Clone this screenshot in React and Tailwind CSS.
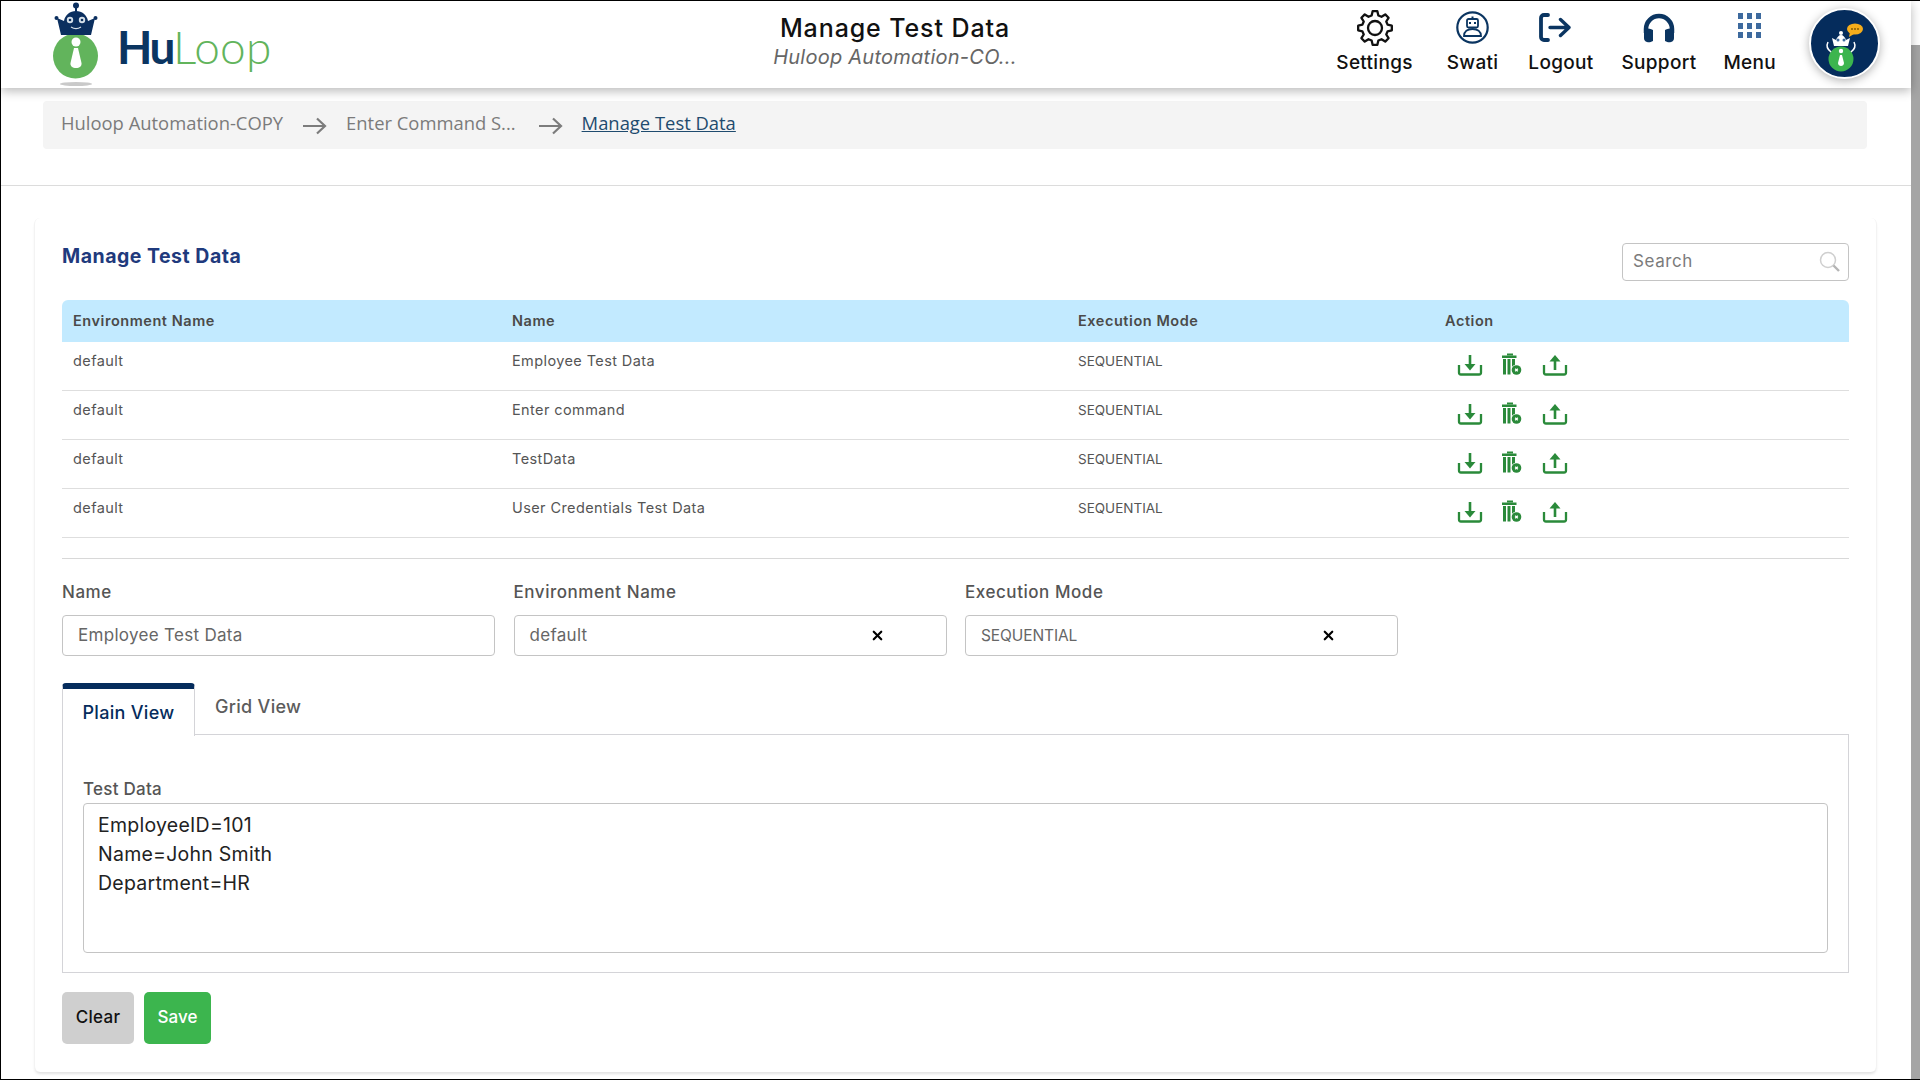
import React from "react";
import { X } from "lucide-react";

const rows = [
  { env: "default", name: "Employee Test Data", mode: "SEQUENTIAL" },
  { env: "default", name: "Enter command", mode: "SEQUENTIAL" },
  { env: "default", name: "TestData", mode: "SEQUENTIAL" },
  { env: "default", name: "User Credentials Test Data", mode: "SEQUENTIAL" },
];

function Logo() {
  return (
    <svg width="52" height="87" viewBox="50 0 52 87">
      <ellipse cx="76" cy="83" rx="16" ry="2" fill="#c9c9c9" />
      <circle cx="75.5" cy="55" r="22.5" fill="#62b45c" />
      <circle cx="76" cy="41" r="4.5" fill="#fff" />
      <path d="M74 47h4l3.500 15c.5 3-2 5-5.500 5s-6-2-5.500-5z" fill="#fff" />
      <circle cx="76" cy="4.500" r="3" fill="#0b2f5f" />
      <rect x="75" y="6" width="2" height="6" fill="#0b2f5f" />
      <circle cx="56.500" cy="17" r="2" fill="#0b2f5f" />
      <circle cx="95.500" cy="17" r="2" fill="#0b2f5f" />
      <path d="M57 17l7 3c1-6 6-10 12-10s11 4 12 10l7-3-4 17H61z" fill="#0b2f5f" />
      <circle cx="70" cy="19" r="3.200" fill="#d5dfe8" />
      <circle cx="82" cy="19" r="3.200" fill="#d5dfe8" />
      <circle cx="70" cy="19" r="1.300" fill="#0b2f5f" />
      <circle cx="82" cy="19" r="1.300" fill="#0b2f5f" />
      <path d="M71 26c3 2 7 2 10 0" stroke="#d5dfe8" strokeWidth="1.200" fill="none" />
    </svg>
  );
}

// outline of an 8 tooth cog
function gearPath() {
  const pt = (r, deg) => {
    const a = (deg * Math.PI) / 180;
    return (18 + r * Math.cos(a)).toFixed(2) + " " + (18 + r * Math.sin(a)).toFixed(2);
  };
  let d = "";
  for (let i = 0; i < 8; i++) {
    const c = i * 45 - 90;
    d += (i === 0 ? "M" : "L") + pt(13, c - 15);
    d += "L" + pt(17, c - 8) + "L" + pt(17, c + 8) + "L" + pt(13, c + 15);
  }
  return d + "Z";
}

function GearIcon() {
  return (
    <svg width="36" height="36" viewBox="0 0 36 36" fill="none" stroke="#111" strokeWidth="2.300" strokeLinejoin="round">
      <path d={gearPath()} />
      <circle cx="18" cy="18" r="7" />
    </svg>
  );
}

function SwatiIcon() {
  return (
    <svg width="33" height="33" viewBox="0 0 33 33" fill="none">
      <circle cx="16.500" cy="16.500" r="15.200" stroke="#0b3561" strokeWidth="2.200" />
      <rect x="15.500" y="5.500" width="2" height="3" fill="#0b3561" />
      <rect x="11" y="8" width="11" height="8.500" rx="1.500" stroke="#0b3561" strokeWidth="1.800" />
      <rect x="13" y="11" width="2" height="2" fill="#0b3561" />
      <rect x="18" y="11" width="2" height="2" fill="#0b3561" />
      <path d="M8 25c0-4.500 3.500-7 8.500-7s8.500 2.500 8.500 7z" stroke="#0b3561" strokeWidth="1.800" />
    </svg>
  );
}

function LogoutIcon() {
  return (
    <svg width="32" height="29" viewBox="0 0 32 29" fill="none" stroke="#0b3561" strokeLinecap="round" strokeLinejoin="round">
      <path d="M9 2H5a3 3 0 0 0-3 3v19a3 3 0 0 0 3 3h4" strokeWidth="3.800" />
      <path d="M11 14.500h19M21.500 6.500l8.500 8-8.500 8" strokeWidth="3.400" />
    </svg>
  );
}

function HeadphonesIcon() {
  return (
    <svg width="32" height="30" viewBox="0 0 32 30" fill="#0b3561">
      <path d="M3 20V16a13 13 0 0 1 26 0v4" fill="none" stroke="#0b3561" strokeWidth="4.500" />
      <path d="M1 18c0-1.500 1-2.500 2.500-2.500S8 15.500 10 17v11c-2.500 1.500-4.500 1.500-6 1-2-.5-3-2-3-4z" />
      <path d="M31 18c0-1.500-1-2.500-2.500-2.500S24 15.500 22 17v11c2.500 1.500 4.500 1.500 6 1 2-.5 3-2 3-4z" />
    </svg>
  );
}

function MenuIcon() {
  return (
    <div className="grid grid-cols-3 gap-[3.500px]">
      {Array.from({ length: 9 }).map((_, i) => (
        <span key={i} className="w-[5.500px] h-[6px] bg-[#3d6a9e]" />
      ))}
    </div>
  );
}

function Avatar() {
  return (
    <div className="ml-[6px] w-[71px] h-[71px] rounded-full bg-[#052c5c] border-2 border-white shadow-[0_2px_10px_rgba(0,0,0,0.3)] shrink-0">
      <svg width="67" height="67" viewBox="0 0 67 67">
        <ellipse cx="44" cy="19" rx="8" ry="5.500" fill="#f6ad1b" />
        <path d="M39 22l-1 5 5-3z" fill="#f6ad1b" />
        <circle cx="41" cy="19" r="0.900" fill="#7a5200" />
        <circle cx="44" cy="19" r="0.900" fill="#7a5200" />
        <circle cx="47" cy="19" r="0.900" fill="#7a5200" />
        <circle cx="30" cy="49" r="12.500" fill="#3cb54e" />
        <circle cx="30" cy="41" r="2.200" fill="#fff" />
        <path d="M29 45h2l2 8c0 2-1.500 3-3 3s-3-1-3-3z" fill="#fff" />
        <circle cx="30" cy="23" r="2" fill="#fff" />
        <path d="M21 28l4 2c1-3 3-5 5-5s4 2 5 5l4-2-2 8H23z" fill="#fff" />
        <circle cx="27" cy="30" r="1.500" fill="#3d6a9e" />
        <circle cx="33" cy="30" r="1.500" fill="#3d6a9e" />
        <path d="M17 32c-2 4-1 7 3 10M43 32c2 4 1 7-3 10" stroke="#fff" strokeWidth="1.500" fill="none" />
      </svg>
    </div>
  );
}

function NavItem({ icon, label, iconClass = "", className = "" }) {
  return (
    <div className={"flex flex-col items-center " + className}>
      <div className={"h-[39px] flex items-center justify-center " + iconClass}>{icon}</div>
      <span className="text-[19px] leading-[24px] mt-[4px] text-[#111] font-[450] tracking-[0.3px]">{label}</span>
    </div>
  );
}

function DownloadIcon() {
  return (
    <svg width="26" height="22" viewBox="0 0 26 22" fill="none" stroke="#2a8a3a" strokeWidth="2.300">
      <path d="M2 11v7.500a2 2 0 0 0 2 2h18a2 2 0 0 0 2-2V11" />
      <path d="M13 1v11" strokeWidth="2.600" />
      <path d="M7.500 10h11L13 16.500z" fill="#2a8a3a" stroke="none" />
    </svg>
  );
}

function UploadIcon() {
  return (
    <svg width="26" height="22" viewBox="0 0 26 22" fill="none" stroke="#2a8a3a" strokeWidth="2.300">
      <path d="M2 11v7.500a2 2 0 0 0 2 2h18a2 2 0 0 0 2-2V11" />
      <path d="M13 7v9" strokeWidth="2.600" />
      <path d="M7.500 7.500h11L13 1z" fill="#2a8a3a" stroke="none" />
    </svg>
  );
}

function TrashIcon() {
  return (
    <svg width="20" height="23" viewBox="0 0 20 23">
      <rect x="5" y="0.500" width="6" height="2" fill="#2a8a3a" />
      <rect x="0" y="2.500" width="14.500" height="2.500" fill="#2a8a3a" />
      <rect x="1" y="6" width="3" height="15.500" fill="#2a8a3a" />
      <rect x="5.500" y="6" width="3" height="15.500" fill="#2a8a3a" />
      <rect x="10" y="6" width="3" height="8" fill="#2a8a3a" />
      <circle cx="14.500" cy="17" r="5.500" fill="#fff" />
      <circle cx="14.500" cy="17" r="4.800" fill="#2a8a3a" />
      <path d="M13.200 15.700l2.600 2.600M15.800 15.700l-2.600 2.600" stroke="#fff" strokeWidth="1.300" />
    </svg>
  );
}

function SearchIcon() {
  return (
    <svg width="22" height="22" viewBox="0 0 22 22" fill="none">
      <circle cx="9" cy="9" r="7.500" stroke="#cfcfcf" strokeWidth="1.500" />
      <path d="M14.500 14.500L20 20" stroke="#b5b5b5" strokeWidth="2.400" />
    </svg>
  );
}

function Arrow() {
  return (
    <svg width="24" height="18" viewBox="0 0 24 18" fill="none" stroke="#7c7c7c" strokeWidth="2.200">
      <path d="M0 9h22M14 1.500L22 9l-8 7.500" />
    </svg>
  );
}

function Field({ label, value, clear, width, valueClass = "text-[17px] tracking-[0.3px]" }) {
  return (
    <div className="w-[433px]">
      <div className="text-[17px] leading-[24px] text-[#555] tracking-[0.55px] font-[450]">{label}</div>
      <div className="mt-[11px] h-[41px] border border-[#c4c4c4] rounded-[4px] flex items-center pl-[15px] pt-[1px] text-[#666]">
        <span className={width + " " + valueClass}>{value}</span>
        {clear && <X size={15} strokeWidth={3.500} className="text-black" />}
      </div>
    </div>
  );
}

export default function App() {
  return (
    <div className="w-[1920px] h-[1080px] flex overflow-hidden bg-white border-t border-l border-b border-black font-['Inter',sans-serif]">
      <div className="flex-1 min-w-0 flex flex-col">
        {/* Header */}
        <header className="h-[87px] shrink-0 bg-white shadow-[0_3px_10px_rgba(0,0,0,0.28)] flex items-start relative">
          <div className="w-[720px] pl-[49px] flex items-start">
            <Logo />
            <div className="ml-[15px] mt-[18px] text-[46px] leading-[56px] font-['Lato',sans-serif]">
              <span className="font-bold text-[#0b3561] tracking-[-2.5px]">Hu</span>
              <span className="font-light text-[#62b45c] tracking-[0.2px]">Loop</span>
            </div>
          </div>
          <div className="ml-[49px] w-[250px] text-center mt-[11px]">
            <div className="text-[25px] leading-[33px] font-medium text-[#111] tracking-[0.9px] whitespace-nowrap">Manage Test Data</div>
            <div className="text-[20px] leading-[24px] italic text-[#666] tracking-[0.25px] whitespace-nowrap">Huloop Automation-CO...</div>
          </div>
          <div className="ml-auto mr-[31px] mt-[7px] flex items-start gap-[27px]">
            <NavItem icon={<GearIcon />} label="Settings" />
            <NavItem icon={<SwatiIcon />} label="Swati" className="ml-[7px]" />
            <NavItem icon={<LogoutIcon />} iconClass="pr-[11px]" label="Logout" className="ml-[3px]" />
            <NavItem icon={<HeadphonesIcon />} label="Support" className="ml-[1px]" />
            <NavItem icon={<MenuIcon />} iconClass="pb-[4px]" label="Menu" />
            <Avatar />
          </div>
        </header>

        {/* Breadcrumb */}
        <div className="mt-[13px] ml-[42px] w-[1824px] h-[48px] shrink-0 bg-[#f4f4f4] rounded-[4px] flex items-center pl-[18px] pb-[5px] text-[18.400px] text-[#7b7b7b] font-['Open_Sans',sans-serif]">
          <span>Huloop Automation-COPY</span>
          <span className="ml-[20px] mt-[7px]"><Arrow /></span>
          <span className="ml-[19px]">Enter Command S...</span>
          <span className="ml-[23px] mt-[7px]"><Arrow /></span>
          <span className="ml-[19px] text-[#1f4b6e] underline">Manage Test Data</span>
        </div>
        <div className="mt-[36px] h-px shrink-0 bg-[#dcdcdc]" />

        {/* Card */}
        <div className="mt-[32px] ml-[33px] w-[1843px] h-[854px] shrink-0 bg-white rounded-[6px] shadow-[0_3px_3px_-1px_rgba(0,0,0,0.12)] border-x border-[#f3f3f3] pl-[27px] pr-[27px] pt-[25px]">
          <div className="flex items-start justify-between">
            <h2 className="text-[19.500px] leading-[26px] font-bold text-[#1f3a7d] tracking-[0.5px]">Manage Test Data</h2>
            <div className="w-[227px] h-[38px] border border-[#c4c4c4] rounded-[4px] flex items-center justify-between pl-[10px] pr-[7px] text-[17px] text-[#7b7b7b] tracking-[0.6px]">
              <span>Search</span>
              <SearchIcon />
            </div>
          </div>

          <table className="mt-[19px] w-full table-fixed border-b border-[#dedede]">
            <colgroup>
              <col className="w-[439px]" />
              <col className="w-[566px]" />
              <col className="w-[367px]" />
              <col />
            </colgroup>
            <thead>
              <tr className="h-[42px] bg-[#c2eaff] text-[14.500px] text-[#4a4a4a] tracking-[0.55px] text-left">
                <th className="pl-[11px] font-semibold rounded-tl-[6px]">Environment Name</th>
                <th className="pl-[11px] font-semibold">Name</th>
                <th className="pl-[11px] font-semibold">Execution Mode</th>
                <th className="pl-[11px] font-semibold rounded-tr-[6px]">Action</th>
              </tr>
            </thead>
            <tbody>
              {rows.map((r, i) => (
                <tr
                  key={r.name}
                  className={
                    "text-[14.500px] text-[#555] " +
                    (i === 0 ? "h-[48px] " : "h-[49px] ") +
                    (i < rows.length - 1 ? "border-b border-[#dedede]" : "")
                  }
                >
                  <td className="pl-[11px] pb-[9px] tracking-[0.4px]">{r.env}</td>
                  <td className="pl-[11px] pb-[9px] tracking-[0.4px]">{r.name}</td>
                  <td className="pl-[11px] pb-[9px] text-[13.500px]">{r.mode}</td>
                  <td className="pl-[23px] pb-[2px]">
                    <div className="flex items-center">
                      <DownloadIcon />
                      <span className="ml-[19px]"><TrashIcon /></span>
                      <span className="ml-[20px]"><UploadIcon /></span>
                    </div>
                  </td>
                </tr>
              ))}
            </tbody>
          </table>

          <div className="mt-[20px] h-px bg-[#d8d8d8]" />

          <div className="mt-[21px] flex gap-[18.500px]">
            <Field label="Name" value="Employee Test Data" />
            <Field label="Environment Name" value="default" clear width="w-[340px] inline-block" />
            <Field label="Execution Mode" value="SEQUENTIAL" clear width="w-[340px] inline-block" valueClass="text-[15.500px] tracking-[-0.1px]" />
          </div>

          {/* Tabs */}
          <div className="mt-[26px] flex items-end h-[53px]">
            <div className="w-[133px] h-[53px] border-t-[6px] border-t-[#052c5c] border-x border-x-[#d4d4d8] rounded-t-[4px] flex justify-center pt-[10px] text-[18px] leading-[28px] text-[#052c5c] font-medium tracking-[0.3px] bg-white -mb-px relative">
              Plain View
            </div>
            <div className="flex-1 h-full border-b border-[#d4d4d8] pl-[20px] pt-[11px] text-[18px] leading-[28px] text-[#5c5c5c] tracking-[0.3px] font-[450]">
              Grid View
            </div>
          </div>
          <div className="h-[238px] border-x border-b border-[#d4d4d8] px-[20px] pt-[42px]">
            <div className="text-[17px] leading-[24px] text-[#555] tracking-[0.25px] font-[450]">Test Data</div>
            <textarea
              readOnly
              className="block w-full h-[150px] mt-[2px] border border-[#c4c4c4] rounded-[4px] px-[14px] pt-[7px] text-[19.500px] leading-[29px] text-[#222] tracking-[0.25px] resize-none outline-none"
              value={"EmployeeID=101\nName=John Smith\nDepartment=HR"}
            />
          </div>

          {/* Buttons */}
          <div className="mt-[19px] flex gap-[10px]">
            <button className="w-[72px] h-[52px] rounded-[5px] bg-[#cfcfcf] text-[17px] font-medium text-[#111] tracking-[0.3px]">Clear</button>
            <button className="w-[67px] h-[52px] rounded-[5px] bg-[#3cb54e] text-[17px] font-medium text-white">Save</button>
          </div>
        </div>
      </div>

      {/* Scrollbar */}
      <div className="w-[9px] shrink-0 flex flex-col">
        <div className="h-[44px] bg-white" />
        <div className="flex-1 bg-[#a5a5a5]" />
      </div>
    </div>
  );
}
